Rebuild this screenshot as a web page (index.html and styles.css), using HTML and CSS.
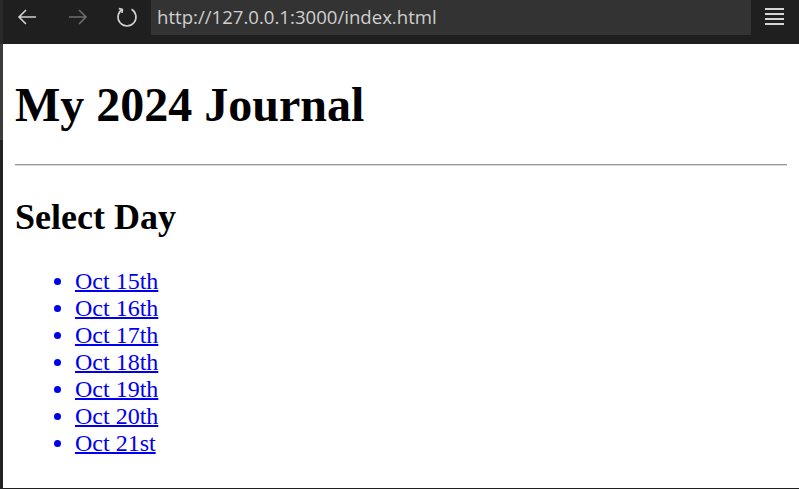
FILE: index.html
```html
<!DOCTYPE html>
<html lang="en">
<head>
<meta charset="utf-8">
<title>My 2024 Journal</title>
<link rel="stylesheet" href="styles.css">
</head>
<body>
<div class="toolbar">
  <div class="nav">
    <span class="edge"></span>
    <svg class="icon back" width="20" height="20" viewBox="0 0 20 20"><path d="M2 10H19M9 3L2 10L9 17" fill="none" stroke="#d0d0d0" stroke-width="1.6"/></svg>
    <svg class="icon fwd" width="20" height="20" viewBox="0 0 20 20"><path d="M1 10H18M11 3L18 10L11 17" fill="none" stroke="#6e6e6e" stroke-width="1.6"/></svg>
    <svg class="icon reload" width="22" height="22" viewBox="0 0 22 22"><path d="M15.5 3.2A9 9 0 1 1 6.5 3.2" fill="none" stroke="#d0d0d0" stroke-width="1.6"/><path d="M6.5 3.2L2.8 2.6M6.5 3.2L6 7" fill="none" stroke="#d0d0d0" stroke-width="1.6"/></svg>
  </div>
  <div class="url">http://127.0.0.1:3000/index.html</div>
  <div class="menu">
    <span class="bar"></span><span class="bar"></span><span class="bar"></span><span class="bar"></span>
  </div>
</div>
<div class="frame">
  <div class="scroll"><span class="thumb"></span></div>
  <main class="page">
    <h1 class="title">My 2024 Journal</h1>
    <hr class="rule">
    <h2 class="subtitle">Select Day</h2>
    <ul class="days">
      <li><a href="#">Oct 15th</a></li>
      <li><a href="#">Oct 16th</a></li>
      <li><a href="#">Oct 17th</a></li>
      <li><a href="#">Oct 18th</a></li>
      <li><a href="#">Oct 19th</a></li>
      <li><a href="#">Oct 20th</a></li>
      <li><a href="#">Oct 21st</a></li>
    </ul>
  </main>
</div>
</body>
</html>
```

FILE: styles.css
```css
html, body {
  margin: 0;
  padding: 0;
  width: 799px;
  height: 489px;
  overflow: hidden;
  background: #1f1f1f;
}

.toolbar {
  height: 44px;
  display: flex;
  align-items: flex-start;
  background: #1f1f1f;
}

.nav {
  width: 151px;
  height: 44px;
  display: flex;
  align-items: flex-start;
  position: relative;
}

.edge {
  position: absolute;
  left: 0;
  top: 0;
  width: 3px;
  height: 44px;
  background: #2a2a2a;
}

.icon {
  display: block;
  margin-top: 7px;
}
.back { margin-left: 17px; }
.fwd { margin-left: 31px; }
.reload { margin-left: 28px; margin-top: 6px; }

.url {
  width: 594px;
  height: 35px;
  background: #333333;
  color: #cfcfcf;
  font-family: "Open Sans", "Noto Sans", sans-serif;
  font-size: 18.6px;
  line-height: 33px;
  padding-left: 6px;
  box-sizing: content-box;
  white-space: nowrap;
}

.menu {
  flex: 1;
  display: flex;
  flex-direction: column;
  align-items: flex-end;
  padding: 8px 15px 0 0;
  gap: 3px;
}
.bar {
  display: block;
  width: 19px;
  height: 2px;
  background: #d4d4d4;
}

.frame {
  height: 444px;
  display: flex;
  background: #ffffff;
  border-bottom: 1px solid #1f1f1f;
}

.scroll {
  width: 3px;
  background: #232323;
  position: relative;
}
.thumb {
  position: absolute;
  left: 0;
  top: 0;
  width: 3px;
  height: 96px;
  background: #3c3c3c;
}

.page {
  flex: 1;
  padding: 0 12px;
  font-family: "Liberation Serif", "Times New Roman", serif;
  color: #000;
  overflow: hidden;
}

.title {
  font-size: 48px;
  font-weight: bold;
  margin: 33px 0 32px;
}

.rule {
  margin: 12px 0;
  border: 0;
  border-top: 1px solid #9a9a9a;
  border-bottom: 1px solid #d6d6d6;
  height: 0;
}

.subtitle {
  font-size: 36px;
  font-weight: bold;
  margin: 30px 0;
}

.days {
  margin: 30px 0;
  padding-left: 60px;
  font-size: 24px;
  color: #0000ee;
  line-height: 27px;
}

.days a {
  color: #0000ee;
  text-decoration: underline;
  text-decoration-thickness: 2px;
}
```
